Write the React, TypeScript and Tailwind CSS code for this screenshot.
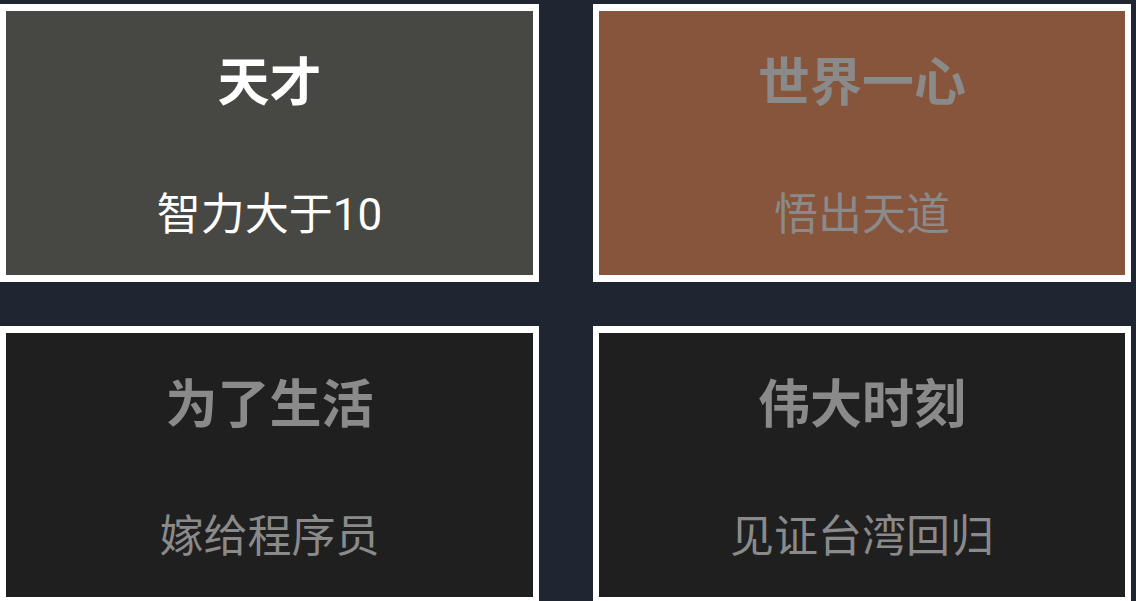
import React from 'react';

interface Achievement {
  title: string;
  desc: string;
  bg: string;
  text: string;
}

const items: Achievement[] = [
  { title: '天才', desc: '智力大于10', bg: 'bg-[#474844]', text: 'text-white' },
  { title: '世界一心', desc: '悟出天道', bg: 'bg-[#87553c]', text: 'text-[#8a8a8a]' },
  { title: '为了生活', desc: '嫁给程序员', bg: 'bg-[#1f1f1f]', text: 'text-[#8a8a8a]' },
  { title: '伟大时刻', desc: '见证台湾回归', bg: 'bg-[#1f1f1f]', text: 'text-[#8a8a8a]' },
];

export default function App() {
  return (
    <div
      className="h-[601px] w-[1136px] overflow-hidden bg-[#1f2631] pt-[4px]"
      style={{ fontFamily: 'Roboto, "Noto Sans CJK SC", sans-serif' }}
    >
      <div className="grid grid-cols-[539px_538px] gap-x-[54px] gap-y-[44px]">
        {items.map((item) => (
          <div
            key={item.title}
            className={`h-[278px] border-x-[6px] border-y-[7px] border-white ${item.bg} ${item.text} flex flex-col items-center`}
          >
            <div className="mt-[43px] h-[60px] text-[52px] font-bold leading-[60px]">{item.title}</div>
            <div className="mt-[71px] h-[60px] text-[44px] leading-[60px]">{item.desc}</div>
          </div>
        ))}
      </div>
    </div>
  );
}
